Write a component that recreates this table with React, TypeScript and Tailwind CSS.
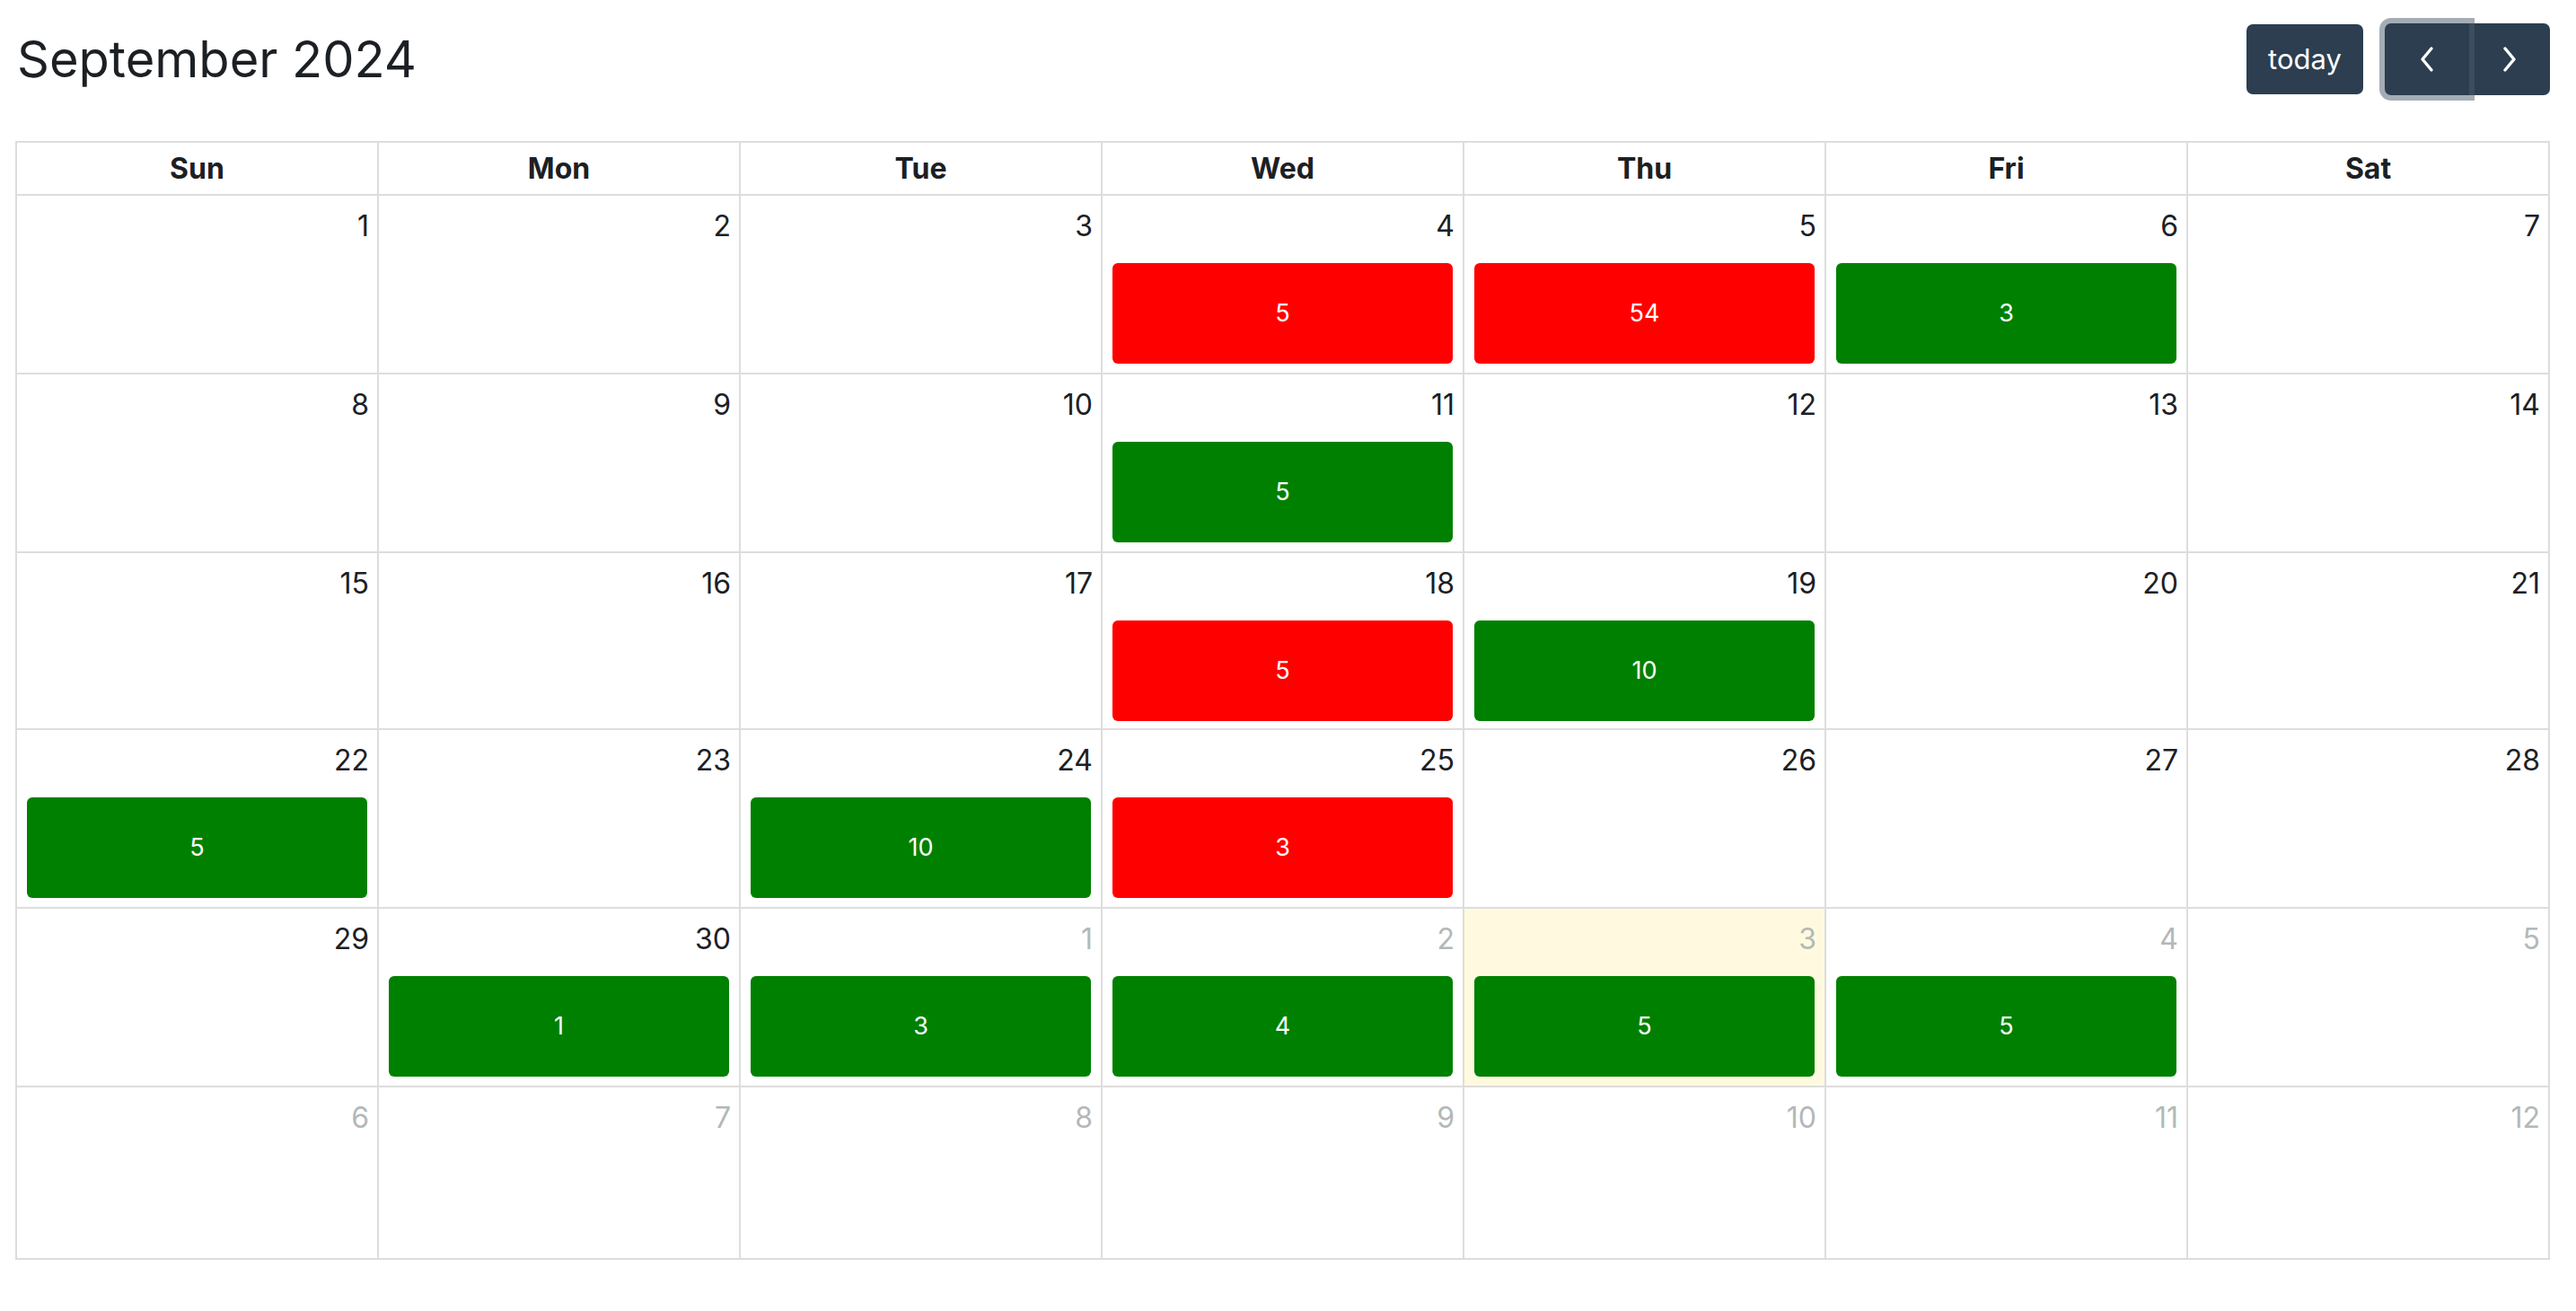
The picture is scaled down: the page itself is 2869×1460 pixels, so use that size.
import React from "react";

type Ev = { label: string; color: "red" | "green" };

interface Day {
  num: number;
  other?: boolean;
  today?: boolean;
  event?: Ev;
}

const WEEKDAYS = ["Sun", "Mon", "Tue", "Wed", "Thu", "Fri", "Sat"];

// row heights, taken from the picture
const ROW_H = ["h-[199px]", "h-[199px]", "h-[197px]", "h-[199px]", "h-[199px]", "h-[192px]"];

const red = (label: string): Ev => ({ label, color: "red" });
const green = (label: string): Ev => ({ label, color: "green" });

const WEEKS: Day[][] = [
  [
    { num: 1 },
    { num: 2 },
    { num: 3 },
    { num: 4, event: red("5") },
    { num: 5, event: red("54") },
    { num: 6, event: green("3") },
    { num: 7 },
  ],
  [
    { num: 8 },
    { num: 9 },
    { num: 10 },
    { num: 11, event: green("5") },
    { num: 12 },
    { num: 13 },
    { num: 14 },
  ],
  [
    { num: 15 },
    { num: 16 },
    { num: 17 },
    { num: 18, event: red("5") },
    { num: 19, event: green("10") },
    { num: 20 },
    { num: 21 },
  ],
  [
    { num: 22, event: green("5") },
    { num: 23 },
    { num: 24, event: green("10") },
    { num: 25, event: red("3") },
    { num: 26 },
    { num: 27 },
    { num: 28 },
  ],
  [
    { num: 29 },
    { num: 30, event: green("1") },
    { num: 1, other: true, event: green("3") },
    { num: 2, other: true, event: green("4") },
    { num: 3, other: true, today: true, event: green("5") },
    { num: 4, other: true, event: green("5") },
    { num: 5, other: true },
  ],
  [
    { num: 6, other: true },
    { num: 7, other: true },
    { num: 8, other: true },
    { num: 9, other: true },
    { num: 10, other: true },
    { num: 11, other: true },
    { num: 12, other: true },
  ],
];

function Chevron({ dir }: { dir: "left" | "right" }) {
  return (
    <svg width="20" height="30" viewBox="0 0 20 30" fill="none">
      <polyline
        points={dir === "left" ? "15,3 5,15 15,27" : "5,3 15,15 5,27"}
        stroke="white"
        strokeWidth="3.4"
        strokeLinecap="round"
        strokeLinejoin="round"
      />
    </svg>
  );
}

function DayCell({ day, height }: { day: Day; height: string }) {
  return (
    <div
      className={`flex flex-col border-r-2 border-b-2 border-[#dddddd] ${height} ${
        day.today ? "bg-[#fffadf]" : "bg-white"
      }`}
    >
      <div
        className={`pt-[10px] pr-[9px] text-right text-[32px] leading-[48px] ${
          day.other ? "text-[#b3b8b8]" : "text-[#1c2024]"
        }`}
      >
        {day.num}
      </div>
      {day.event && (
        <div
          className={`mx-[11px] mt-[17px] flex h-[112px] items-center justify-center rounded-[6px] text-[27px] text-white ${
            day.event.color === "red" ? "bg-[#ff0000]" : "bg-[#008000]"
          }`}
        >
          {day.event.label}
        </div>
      )}
    </div>
  );
}

export default function App() {
  return (
    <div className="min-h-[1460px] w-full bg-white font-['Inter',sans-serif] text-[#212529]">
      <div className="ml-[17px] w-[2823px] pt-[27px]">
        {/* Toolbar */}
        <div className="mb-[52px] flex h-[78px] items-center justify-between">
          <h2 className="pl-[2px] text-[56px] font-normal leading-none text-[#1c2024]">September 2024</h2>
          <div className="flex items-center gap-[24px]">
            <button className="h-[78px] w-[130px] rounded-[7px] bg-[#2c3e50] text-[31px] text-white">
              today
            </button>
            <div className="flex">
              <button className="relative z-10 flex h-[80px] w-[94px] items-center justify-center rounded-l-[7px] bg-[#2c3e50] shadow-[0_0_0_6px_rgba(76,91,106,0.5)]">
                <Chevron dir="left" />
              </button>
              <button className="flex h-[80px] w-[90px] items-center justify-center rounded-r-[7px] bg-[#2c3e50]">
                <Chevron dir="right" />
              </button>
            </div>
          </div>
        </div>

        {/* Grid */}
        <div className="grid grid-cols-7 border-t-2 border-l-2 border-[#dddddd]">
          {WEEKDAYS.map((d) => (
            <div
              key={d}
              className="flex h-[59px] items-center justify-center border-r-2 border-b-2 border-[#dddddd] text-[32px] font-bold text-[#1c2024]"
            >
              {d}
            </div>
          ))}
          {WEEKS.map((week, wi) =>
            week.map((day, di) => <DayCell key={`${wi}-${di}`} day={day} height={ROW_H[wi]} />)
          )}
        </div>
      </div>
    </div>
  );
}
